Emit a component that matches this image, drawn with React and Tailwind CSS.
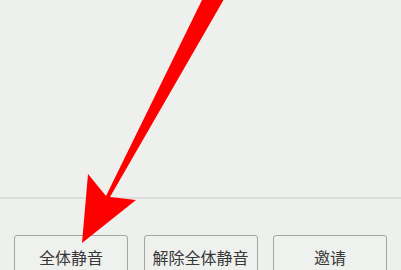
export default function App() {
  const labels = ["全体静音", "解除全体静音", "邀请"];
  return (
    <div className="relative w-[401px] h-[270px] overflow-hidden bg-[#eef0ed] flex flex-col" style={{ fontFamily: '"Noto Sans CJK SC", "Noto Sans", sans-serif' }}>
      <div className="h-[197px] shrink-0" />
      <div className="h-[2px] bg-[#dcdedb] shrink-0" />
      <div className="flex justify-between px-[14px] pt-[36px]">
        {labels.map((l) => (
          <div
            key={l}
            className="w-[114px] h-[48px] shrink-0 rounded-[3px] border-[1.5px] border-[#a3a5a3] bg-[#eff1ee] flex justify-center pt-[13px] text-[16px] leading-[16px] text-[#383838]"
          >
            {l}
          </div>
        ))}
      </div>
      <svg className="absolute left-0 top-0" width="401" height="270" viewBox="0 0 401 270">
        <polygon
          points="202,0 223.5,0 110,197 136,200 82,243 88,174 106,196"
          fill="#ff0000"
        />
      </svg>
    </div>
  );
}
